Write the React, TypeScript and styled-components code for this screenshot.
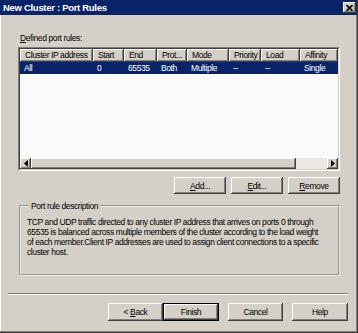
import React from 'react';
import styled, { createGlobalStyle, css } from 'styled-components';

const GlobalStyle = createGlobalStyle`
  html, body {
    margin: 0;
    padding: 0;
    background: #d4d0c8;
  }
  body {
    font-family: "Liberation Sans", Arial, sans-serif;
    font-size: 8.5px;
    letter-spacing: -0.4px;
    color: #000;
  }
`;

const raised = css`
  background: #d4d0c8;
  box-shadow: inset -1px -1px 0 #404040, inset 1px 1px 0 #ffffff, inset -2px -2px 0 #808080;
`;

const Window = styled.div`
  width: 358px;
  height: 333px;
  box-sizing: border-box;
  display: flex;
  flex-direction: column;
  background: #d4d0c8;
  border-right: 1px solid #404040;
  border-bottom: 1px solid #404040;
  box-shadow: inset -1px -1px 0 #808080, inset 1px 0 0 #ffffff;
`;

const TitleBar = styled.div`
  height: 15px;
  display: flex;
  align-items: center;
  justify-content: space-between;
  padding: 0 1px 0 3px;
  background: #0a246a;
  color: #fff;
  font-weight: bold;
  font-size: 9.5px;
  letter-spacing: -0.3px;
`;

const CloseButton = styled.div`
  ${raised};
  width: 13px;
  height: 11px;
  display: flex;
  align-items: center;
  justify-content: center;
`;

const Content = styled.div`
  padding: 18px 17px 0 18px;
  display: flex;
  flex-direction: column;
`;

const Label = styled.div`
  line-height: 10px;
  height: 10px;
  margin-left: 2px;
`;

const Key = styled.span`
  text-decoration: underline;
`;

const ListView = styled.div`
  margin-top: 4px;
  height: 124px;
  box-sizing: border-box;
  border: 1px solid;
  border-color: #808080 #ffffff #ffffff #808080;
`;

const ListInner = styled.div`
  height: 100%;
  box-sizing: border-box;
  border: 1px solid;
  border-color: #404040 #d4d0c8 #d4d0c8 #404040;
  background: #fafafa;
  display: flex;
  flex-direction: column;
`;

const GridRow = styled.div<{ $cols: string; $selected?: boolean }>`
  display: grid;
  grid-template-columns: ${(p) => p.$cols};
  height: ${(p) => (p.$selected ? '12px' : '13px')};
  line-height: ${(p) => (p.$selected ? '12px' : '13px')};
  background: ${(p) => (p.$selected ? '#0a246a' : 'transparent')};
  color: ${(p) => (p.$selected ? '#fff' : '#000')};
`;

const HeaderCell = styled.div`
  ${raised};
  padding-left: 5px;
  white-space: nowrap;
  overflow: hidden;
`;

const Cell = styled.div`
  padding-left: 4px;
  white-space: nowrap;
  overflow: hidden;
`;

const ListBody = styled.div`
  flex: 1;
`;

const ScrollBar = styled.div`
  height: 11px;
  display: flex;
  background: #ebe9e4;
`;

const ArrowButton = styled.div`
  ${raised};
  width: 11px;
  display: flex;
  align-items: center;
  justify-content: center;
`;

const Track = styled.div`
  flex: 1;
  display: flex;
`;

const Thumb = styled.div`
  ${raised};
  width: 89.5%;
`;

const ButtonRow = styled.div<{ $gap: number }>`
  display: flex;
  justify-content: flex-end;
  gap: ${(p) => p.$gap}px;
`;

const Button = styled.div<{ $w: number; $h: number; $default?: boolean }>`
  ${raised};
  width: ${(p) => p.$w}px;
  height: ${(p) => p.$h}px;
  box-sizing: border-box;
  display: flex;
  align-items: center;
  justify-content: center;
  white-space: pre;
  ${(p) =>
    p.$default &&
    css`
      box-shadow: inset 0 0 0 1px #000, inset -2px -2px 0 #404040, inset 2px 2px 0 #ffffff,
        inset -3px -3px 0 #808080;
    `}
`;

const GroupBox = styled.fieldset`
  margin: 7px 0 0 1px;
  padding: 6px 6px 0 6px;
  height: 75px;
  box-sizing: border-box;
  border: 2px groove #ece9e4;
  min-width: 0;
`;

const Legend = styled.legend`
  padding: 0 2px;
  margin-left: 2px;
  line-height: 10px;
`;

const Description = styled.p`
  margin: 0;
  line-height: 10px;
  white-space: nowrap;
`;

const Footer = styled.div`
  margin-top: 17px;
  padding: 0 9px 0 8px;
  display: flex;
  flex-direction: column;
`;

const Separator = styled.div`
  border-top: 1px solid #808080;
  border-bottom: 1px solid #ffffff;
  margin-bottom: 8px;
`;

const Pair = styled.div`
  display: flex;
`;

const columns = [
  { label: 'Cluster IP address', w: 73 },
  { label: 'Start', w: 31 },
  { label: 'End', w: 33 },
  { label: 'Prot...', w: 30 },
  { label: 'Mode', w: 42 },
  { label: 'Priority', w: 32 },
  { label: 'Load', w: 39 },
  { label: 'Affinity', w: 38 },
];

const rules = [['All', '0', '65535', 'Both', 'Multiple', '--', '--', 'Single']];

const description = [
  'TCP and UDP traffic directed to any cluster IP address that arrives on ports 0 through',
  '65535 is balanced across multiple members of the cluster according to the load weight',
  'of each member.Client IP addresses are used to assign client connections to a specific',
  'cluster host.',
];

const cols = columns.map((c) => `${c.w}px`).join(' ');

const Arrow: React.FC<{ dir: 'left' | 'right' }> = ({ dir }) => (
  <svg width="4" height="7" viewBox="0 0 4 7">
    <path d={dir === 'left' ? 'M4 0 L0 3.5 L4 7 Z' : 'M0 0 L4 3.5 L0 7 Z'} fill="#000" />
  </svg>
);

const App: React.FC = () => {
  return (
    <>
      <GlobalStyle />
      <Window>
        <TitleBar>
          <span>New Cluster : Port Rules</span>
          <CloseButton>
            <svg width="7" height="6" viewBox="0 0 7 6">
              <path d="M0.5 0 L6.5 6 M6.5 0 L0.5 6" stroke="#000" strokeWidth="1.6" />
            </svg>
          </CloseButton>
        </TitleBar>
        <Content>
          <Label>
            <Key>D</Key>efined port rules:
          </Label>
          <ListView>
            <ListInner>
              <GridRow $cols={cols}>
                {columns.map((c) => (
                  <HeaderCell key={c.label}>{c.label}</HeaderCell>
                ))}
              </GridRow>
              <ListBody>
                {rules.map((r) => (
                  <GridRow key={r[0]} $cols={cols} $selected>
                    {r.map((v, i) => (
                      <Cell key={i}>{v}</Cell>
                    ))}
                  </GridRow>
                ))}
              </ListBody>
              <ScrollBar>
                <ArrowButton>
                  <Arrow dir="left" />
                </ArrowButton>
                <Track>
                  <Thumb />
                </Track>
                <ArrowButton>
                  <Arrow dir="right" />
                </ArrowButton>
              </ScrollBar>
            </ListInner>
          </ListView>
          <ButtonRow $gap={5} style={{ marginTop: 6 }}>
            <Button $w={52} $h={17}>
              <Key>A</Key>dd...
            </Button>
            <Button $w={52} $h={17}>
              <Key>E</Key>dit...
            </Button>
            <Button $w={52} $h={17}>
              <Key>R</Key>emove
            </Button>
          </ButtonRow>
          <GroupBox>
            <Legend>Port rule description</Legend>
            <Description>
              {description.map((line, i) => (
                <React.Fragment key={i}>
                  {line}
                  {i < description.length - 1 && <br />}
                </React.Fragment>
              ))}
            </Description>
          </GroupBox>
        </Content>
        <Footer>
          <Separator />
          <ButtonRow $gap={9}>
            <Pair>
              <Button $w={55} $h={18}>
                {'< '}
                <Key>B</Key>ack
              </Button>
              <Button $w={56} $h={18} $default>
                Finish
              </Button>
            </Pair>
            <Button $w={55} $h={18}>
              Cancel
            </Button>
            <Button $w={56} $h={18}>
              Help
            </Button>
          </ButtonRow>
        </Footer>
      </Window>
    </>
  );
};

export default App;
